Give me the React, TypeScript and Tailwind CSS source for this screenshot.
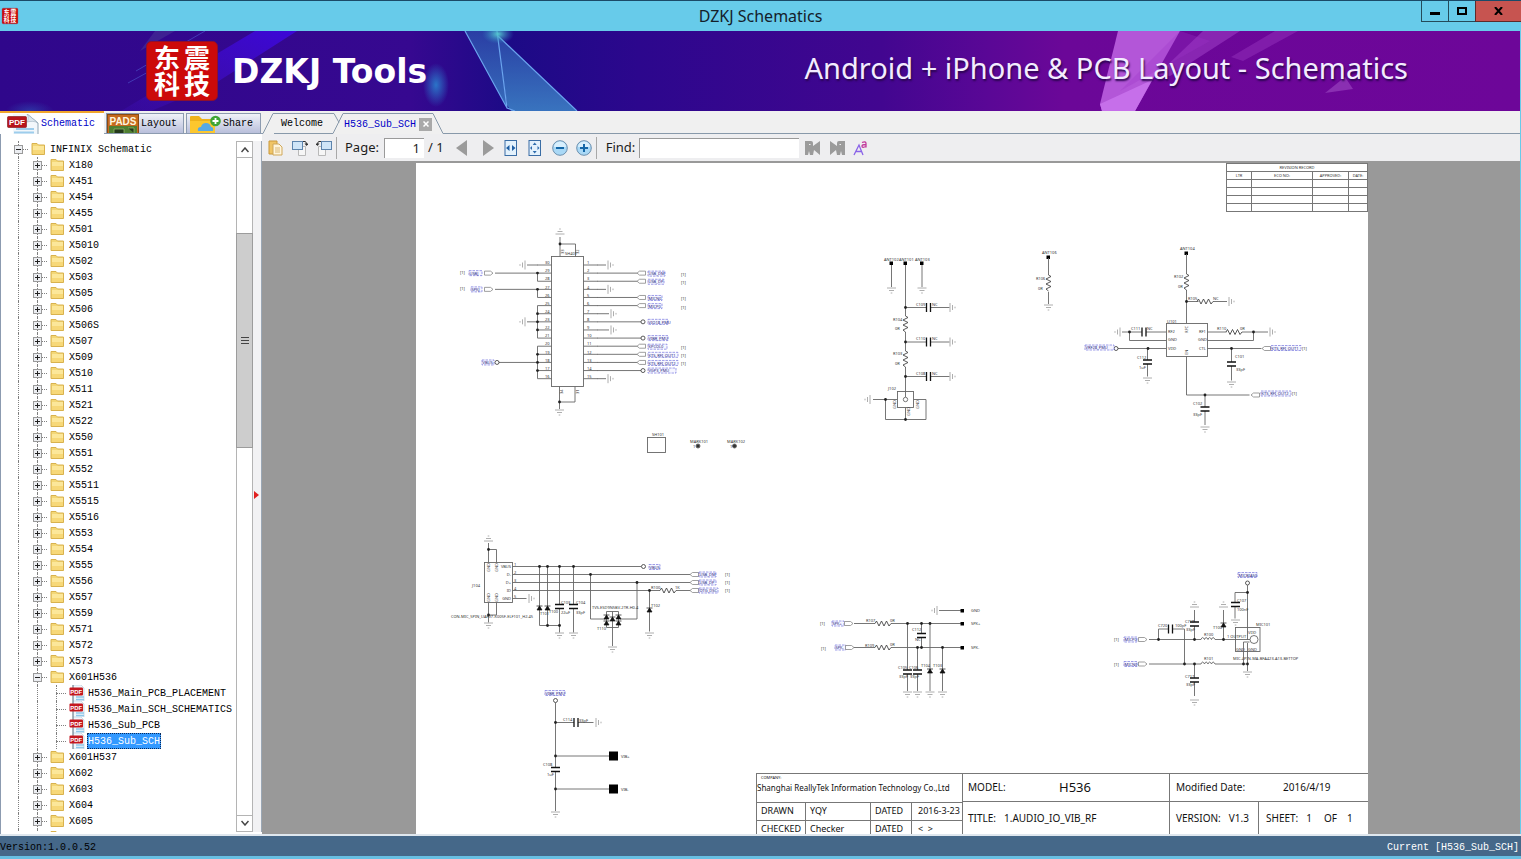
import { useState } from 'react';
import type { ReactNode } from 'react';

type Dir = 'up' | 'down' | 'left' | 'right';

interface Point {
  x: number;
  y: number;
}

const FOLDERS_BEFORE = [
  'X180', 'X451', 'X454', 'X455', 'X501', 'X5010', 'X502', 'X503', 'X505', 'X506', 'X506S',
  'X507', 'X509', 'X510', 'X511', 'X521', 'X522', 'X550', 'X551', 'X552', 'X5511', 'X5515',
  'X5516', 'X553', 'X554', 'X555', 'X556', 'X557', 'X559', 'X571', 'X572', 'X573'
];

const FILES = ['H536_Main_PCB_PLACEMENT', 'H536_Main_SCH_SCHEMATICS', 'H536_Sub_PCB', 'H536_Sub_SCH'];

const FOLDERS_AFTER = ['X601H537', 'X602', 'X603', 'X604', 'X605', ''];

const MONO = "font-['Liberation_Mono',monospace] text-[10px]";
const UI = "font-['Noto_Sans','Open_Sans',sans-serif]";

/* ---------- icons ---------- */

function SealIcon({ className }: { className: string }) {
  return (
    <svg viewBox="0 0 72 60" preserveAspectRatio="none" className={`overflow-visible ${className}`} aria-hidden="true">
      <rect x="0.5" y="0.5" width="71" height="59" rx="5" fill="#cc0a0a" stroke="#8d1030" />
      <g
        fill="#fff"
        fontFamily="'Noto Sans CJK SC', sans-serif"
        fontWeight="700"
        fontSize="26"
        textAnchor="middle"
      >
        <text x="21" y="27">东</text>
        <text x="51" y="27">震</text>
        <text x="21" y="53">科</text>
        <text x="51" y="53">技</text>
      </g>
    </svg>
  );
}

function FolderIcon() {
  return (
    <svg viewBox="0 0 15 13" className="-mt-0.5 h-[13px] w-[15px]" aria-hidden="true">
      <path d="M1 1.500h5l1.500 1.500h6v9.500H1z" fill="#f3d777" stroke="#d9b24e" />
      <path d="M2 4h11v8H2z" fill="#fce79a" />
      <path d="M2 8h11v4H2z" fill="#f7d878" />
    </svg>
  );
}

function PdfIcon() {
  return (
    <svg viewBox="0 0 16 16" className="size-4" aria-hidden="true">
      <path d="M4 0h8l3 3v13H4z" fill="#f0f8fd" stroke="#b9cfdc" strokeWidth="0.7" />
      <path d="M4 0v16" stroke="#4b5c68" strokeWidth="0.800" />
      <path d="M7 12h8M7 14.500h8" stroke="#8fc8ea" strokeWidth="1.400" />
      <rect x="0.500" y="2.500" width="13.500" height="8" rx="1" fill="#c4181f" />
      <text x="7.200" y="8.800" fontSize="6" fontWeight="700" fill="#fff" textAnchor="middle" fontFamily="'Liberation Sans', sans-serif">
        PDF
      </text>
    </svg>
  );
}

function PdfTabIcon() {
  return (
    <svg viewBox="0 0 32 20" className="h-5 w-8" aria-hidden="true">
      <path d="M6 0h16l9 8v12H6z" fill="#f2f7fb" />
      <path d="M20 0l11 9v11" fill="none" stroke="#8fa5b4" />
      <path d="M20 0c2 3 1 7 0 8 4-1 8-1 11 1z" fill="#dbe6ee" stroke="#9cb0bd" strokeWidth="0.600" />
      <path d="M9 15h18M7 18.500h20" stroke="#9dcdec" strokeWidth="2" />
      <rect x="0.500" y="2.500" width="19" height="11" rx="1" fill="#b8141b" stroke="#7d0d12" strokeWidth="0.600" />
      <text x="10" y="11" fontSize="8" fontWeight="700" fill="#fff" textAnchor="middle" fontFamily="'Liberation Sans', sans-serif">
        PDF
      </text>
    </svg>
  );
}

function PadsIcon() {
  return (
    <svg viewBox="0 0 32 19" className="h-[19px] w-8" aria-hidden="true">
      <rect x="0.500" y="0.500" width="31" height="19" fill="#c56a1d" stroke="#8a4a12" />
      <path d="M2 12h28v7H2z" fill="#4f7f32" />
      <path d="M7 19v-4h10v4M21 14h6v5" fill="#243a1b" stroke="#9cc071" strokeWidth="0.700" />
      <text x="16" y="10.500" fontSize="10" fontWeight="700" fill="#fff6df" textAnchor="middle" fontFamily="'Liberation Sans', sans-serif">
        PADS
      </text>
    </svg>
  );
}

function ShareIcon() {
  return (
    <svg viewBox="0 0 32 18" className="h-[18px] w-8" aria-hidden="true">
      <path d="M1 18V2q0-1 1-1h8l3 3h11q2 0 2 2v12z" fill="#eeb21c" />
      <path d="M1 18V6h23q2 0 2 2v10z" fill="#fcc72e" />
      <path d="M9 16q-1-4 3-4 1-4 5-4 4 0 5 4 3 0 2 4z" fill="#58a9e6" />
      <circle cx="26.500" cy="6" r="5.300" fill="#3fa535" />
      <path d="M23.500 6h6M26.500 3v6" stroke="#fff" strokeWidth="1.800" />
    </svg>
  );
}

function OpenIcon() {
  return (
    <svg viewBox="0 0 16 16" className="size-4" aria-hidden="true">
      <path d="M1 1h8v13H1z" fill="#f0c566" stroke="#c9983a" />
      <path d="M5 4h6l3 3v8H5z" fill="#fff5dc" stroke="#cfa75a" />
      <path d="M7 8h5M7 10h5M7 12h5" stroke="#d9b877" />
    </svg>
  );
}

function RotateIcon({ flip }: { flip?: boolean }) {
  return (
    <svg viewBox="0 0 16 16" className={flip ? 'size-4 -scale-x-100' : 'size-4'} aria-hidden="true">
      <path d="M6.500 6.500h7v9h-7z" fill="#f6f6f6" stroke="#b9b9b9" />
      <rect x="0.500" y="1.500" width="10" height="8" fill="#cfe5f8" stroke="#5d84ad" />
      <path d="M11 1.500h2q1.500 0 1.500 3" fill="none" stroke="#333" />
      <path d="M12.500 3.500h4l-2 2.500z" fill="#333" />
    </svg>
  );
}

function FitIcon({ page }: { page?: boolean }) {
  return (
    <svg viewBox="0 0 14 16" className="h-4 w-3.5" aria-hidden="true">
      <rect x="1" y="0.500" width="11.500" height="15" fill="#e3f1fc" stroke="#3a6da5" />
      {page ? (
        <path d="M6.700 2.500l2 2.500h-4zM6.700 13.500l2-2.500h-4zM2 8l2-2v4zM11.500 8l-2-2v4z" fill="#2f6dad" />
      ) : (
        <path d="M2 8l3.500-3v6zM11.500 8L8 5v6z" fill="#1f5fa5" />
      )}
    </svg>
  );
}

function ZoomIcon({ plus }: { plus?: boolean }) {
  return (
    <svg viewBox="0 0 16 16" className="size-4" aria-hidden="true">
      <circle cx="8" cy="8" r="7.300" fill="#a9d8f6" stroke="#6c8fae" />
      <path d="M2 7a6 5.500 0 0 1 12 0z" fill="#d8effd" />
      <path d={plus ? 'M4 8h8M8 4v8' : 'M4 8h8'} stroke="#1467a8" strokeWidth="2" />
    </svg>
  );
}

function ArrowIcon({ right }: { right?: boolean }) {
  return (
    <svg viewBox="0 0 12 16" className="h-4 w-3" aria-hidden="true">
      <path d={right ? 'M1 0l11 8-11 8z' : 'M11 0L0 8l11 8z'} fill="#9b9b9b" />
    </svg>
  );
}

function FindIcon({ next }: { next?: boolean }) {
  return (
    <svg viewBox="0 0 16 14" className={next ? 'h-3.5 w-4 -scale-x-100' : 'h-3.5 w-4'} aria-hidden="true">
      <path d="M0 0h6q2 0 2 2v3l7-5v14l-6-5-1 5H5l-1-4-1 4H0z" fill="#9b9b9b" />
      <path d="M4 3.500h1.500" stroke="#eee" />
    </svg>
  );
}

/* ---------- window chrome ---------- */

function TitleBar() {
  return (
    <header className="flex h-[31px] shrink-0 items-center border-t border-[#1b4a68] bg-[#67cbea]">
      <div className="w-[100px] pl-0.5">
        <SealIcon className="size-4" />
      </div>
      <h1 className={`${UI} flex-1 text-center text-[16px] leading-none text-[#14202a]`}>DZKJ Schematics</h1>
      <div className="flex w-[100px] self-start">
        <button aria-label="Minimize" className="flex h-[21px] w-7 items-center justify-center border border-t-0 border-[#244a5a]">
          <span className="mt-1 h-[3px] w-2.5 bg-black" />
        </button>
        <button aria-label="Maximize" className="flex h-[21px] w-[26px] items-center justify-center border-b border-[#244a5a]">
          <span className="h-2 w-2.5 border-2 border-black" />
        </button>
        <button aria-label="Close" className="flex h-[21px] flex-1 items-center justify-center border-b border-l border-[#5e2a2a] bg-[#c75450]">
          <svg viewBox="0 0 9 8" className="h-2 w-[9px]" aria-hidden="true">
            <path d="M1 0l7 8M8 0L1 8" stroke="#000" strokeWidth="2" />
          </svg>
        </button>
      </div>
    </header>
  );
}

function Banner() {
  return (
    <div className="relative flex h-20 shrink-0 items-center border-r border-[#67cbea] bg-[#330690]">
      <svg viewBox="0 0 1520 80" preserveAspectRatio="none" className="absolute inset-0 size-full" aria-hidden="true">
        <defs>
          <linearGradient id="sky">
            <stop offset="0" stopColor="#2f078b" />
            <stop offset="0.270" stopColor="#360890" />
            <stop offset="0.335" stopColor="#1c0a86" />
            <stop offset="0.420" stopColor="#2c078d" />
            <stop offset="0.580" stopColor="#420690" />
            <stop offset="0.650" stopColor="#5a0796" />
            <stop offset="0.700" stopColor="#6b0798" />
            <stop offset="1" stopColor="#6d0699" />
          </linearGradient>
          <linearGradient id="glass" x1="0" y1="0" x2="0" y2="1">
            <stop offset="0" stopColor="#2c4bab" />
            <stop offset="1" stopColor="#3d86c8" />
          </linearGradient>
          <radialGradient id="glow">
            <stop offset="0" stopColor="#2b74c8" />
            <stop offset="1" stopColor="#2b74c8" stopOpacity="0" />
          </radialGradient>
          <radialGradient id="spark">
            <stop offset="0" stopColor="#55c8d0" />
            <stop offset="1" stopColor="#2f7fc0" stopOpacity="0" />
          </radialGradient>
          <linearGradient id="beam" x1="1" y1="0" x2="0" y2="1">
            <stop offset="0" stopColor="#3c07d8" />
            <stop offset="1" stopColor="#4412c8" stopOpacity="0.200" />
          </linearGradient>
        </defs>
        <rect width="1520" height="80" fill="url(#sky)" />
        <path d="M255 0h42l-86 55-60 25h-30z" fill="url(#beam)" />
        <path d="M136 40L205 0M128 52l22-12" stroke="#4f5ad0" strokeWidth="1" opacity="0.600" />
        <path d="M140 20L175 0h-20z" fill="#4a3a98" opacity="0.500" />
        <ellipse cx="436" cy="54" rx="13" ry="22" fill="url(#glow)" />
        <ellipse cx="30" cy="80" rx="24" ry="10" fill="url(#glow)" opacity="0.400" />
        <path d="M465 0h32l10 77z" fill="url(#glass)" opacity="0.800" />
        <path d="M497 4l80 76h-66l-4-6z" fill="url(#glass)" opacity="0.850" />
        <path d="M465 0l42 77M497 0l10 77 8 3M497 4l80 76" fill="none" stroke="#6aa4ee" strokeWidth="1.200" />
        <ellipse cx="498" cy="3" rx="16" ry="10" fill="url(#spark)" />
        <path d="M1118 0h62l-45 80h-33l-2-7z" fill="#b356d8" />
        <path d="M1100 73l52-24-17 31h-33z" fill="#c66fea" />
        <path d="M1203 0h37l-70 45-13-1z" fill="#8d2bb6" opacity="0.850" />
        <path d="M1275 0h23l-55 30-12-4z" fill="#8d2bb6" opacity="0.600" />
        <path d="M1180 0l-60 60 90-50z" fill="#9b35c6" opacity="0.300" />
        <path d="M1345 46l8 12-28 4z" fill="#8a2fb2" />
      </svg>
      <div className="relative flex w-full items-center justify-between pl-[146px] pr-[112px]">
        <div className="flex items-center gap-3.5">
          <SealIcon className="h-[60px] w-[72px]" />
          <span className="font-['DejaVu_Sans',sans-serif] text-[33px] font-bold leading-none text-white">DZKJ Tools</span>
        </div>
        <span className={`${UI} pb-2 text-[29px] leading-none text-[#f3ecff] [text-shadow:1px_2px_2px_#2a0550]`}>
          Android + iPhone &amp; PCB Layout - Schematics
        </span>
      </div>
    </div>
  );
}

function SideTabs() {
  const idle = 'mt-0.5 flex items-center gap-0.5 border border-b-0 border-[#8c9bb0] bg-linear-to-b from-[#f0f2f8] to-[#b9bfdb]';
  return (
    <nav className={`${MONO} flex h-[23px] border-b border-[#8c9bb0] bg-[#f0f0f0] text-black`}>
      <button className="-mb-px flex w-[104px] items-center gap-0.5 border-t-2 border-[#f0a52c] bg-white pl-[7px] text-[#0000c8]">
        <PdfTabIcon />
        Schematic
      </button>
      <button className={`${idle} ml-0.5 w-[78px]`}>
        <PadsIcon />
        Layout
      </button>
      <button className={`${idle} ml-0.5 w-[75px] pl-0.5`}>
        <ShareIcon />
        Share
      </button>
    </nav>
  );
}

/* ---------- tree ---------- */

function Guide() {
  return <span className="ml-[9px] w-2.5 shrink-0 self-stretch border-l border-dotted border-[#808080]" />;
}

interface TreeRowProps {
  depth: number;
  label: string;
  expanded?: boolean;
  file?: boolean;
  selected?: boolean;
  onSelect?: () => void;
}

function TreeRow({ depth, label, expanded, file, selected, onSelect }: TreeRowProps) {
  return (
    <li className="flex h-4 items-center pl-2">
      {Array.from({ length: depth }, (_, i) => (
        <Guide key={i} />
      ))}
      <span className="relative flex w-[19px] shrink-0 items-center justify-center self-stretch">
        <span className="absolute inset-y-0 left-[9px] border-l border-dotted border-[#808080]" />
        <span className="absolute left-[9px] right-0 top-2 border-t border-dotted border-[#808080]" />
        {!file && (
          <button
            aria-label={expanded ? 'Collapse' : 'Expand'}
            className="relative flex size-[9px] items-center justify-center border border-[#9a9a9a] bg-[#eceef2]"
          >
            <span className="absolute left-px right-px top-[3px] h-px bg-[#222]" />
            {!expanded && <span className="absolute inset-y-px left-[3px] w-px bg-[#222]" />}
          </button>
        )}
      </span>
      <span className="flex w-[21px] shrink-0 justify-center">{file ? <PdfIcon /> : <FolderIcon />}</span>
      {label && (
        <button
          onClick={onSelect}
          className={
            selected
              ? 'h-4 whitespace-nowrap bg-[#3399ff] px-px leading-[18px] text-white outline-1 -outline-offset-1 outline-dotted outline-[#0a2a5a]'
              : 'h-4 whitespace-nowrap px-px leading-[18px] text-black'
          }
        >
          {label}
        </button>
      )}
    </li>
  );
}

function Tree() {
  const [selected, setSelected] = useState('H536_Sub_SCH');

  return (
    <div className="flex min-h-0 flex-1 border-l border-[#8c9bb0] bg-white pb-0.5 pt-[7px]">
      <ul className={`${MONO} min-w-0 flex-1 overflow-hidden`}>
        <TreeRow depth={0} label="INFINIX Schematic" expanded />
        {FOLDERS_BEFORE.map((name) => (
          <TreeRow key={name} depth={1} label={name} />
        ))}
        <TreeRow depth={1} label="X601H536" expanded />
        {FILES.map((name) => (
          <TreeRow key={name} depth={2} label={name} file selected={name === selected} onSelect={() => setSelected(name)} />
        ))}
        {FOLDERS_AFTER.map((name) => (
          <TreeRow key={name} depth={1} label={name} />
        ))}
      </ul>
      <div className="flex w-[17px] flex-col border border-[#b4b4b4] bg-white">
        <button aria-label="Scroll up" className="flex h-4 items-center justify-center border-b border-[#b4b4b4]">
          <svg viewBox="0 0 8 6" className="h-1.5 w-2" aria-hidden="true">
            <path d="M0.500 5L4 1l3.500 4" fill="none" stroke="#444" strokeWidth="1.500" />
          </svg>
        </button>
        <div className="flex-[75]" />
        <div className="-mx-px flex flex-[214] flex-col items-center justify-center gap-0.5 border border-[#9c9c9c] bg-[#cdcdcd]">
          <span className="h-px w-2 bg-[#444]" />
          <span className="h-px w-2 bg-[#444]" />
          <span className="h-px w-2 bg-[#444]" />
        </div>
        <div className="flex-[368]" />
        <button aria-label="Scroll down" className="flex h-4 items-center justify-center border-t border-[#b4b4b4]">
          <svg viewBox="0 0 8 6" className="h-1.5 w-2" aria-hidden="true">
            <path d="M0.500 1L4 5l3.500-4" fill="none" stroke="#444" strokeWidth="1.500" />
          </svg>
        </button>
      </div>
      <div className="flex w-[9px] items-center border-r border-[#9aa7b5] bg-[#f2f2f4] pl-px">
        <svg viewBox="0 0 5 8" className="mt-4 h-2 w-[5px]" aria-hidden="true">
          <path d="M0 0l5 4-5 4z" fill="#e02020" />
        </svg>
      </div>
    </div>
  );
}

/* ---------- viewer ---------- */

function TabEdge({ d }: { d: string }) {
  return (
    <svg viewBox="0 0 12 21" className="h-[21px] w-3 shrink-0" aria-hidden="true">
      <path d={d} fill="none" stroke="#8899aa" />
    </svg>
  );
}

function DocTabs() {
  return (
    <nav className={`${MONO} flex h-[23px] items-end bg-[#f0f0f0]`}>
      <TabEdge d="M0 20.500h1L11 0.500h1" />
      <button className="h-[21px] border-y border-[#8899aa] pl-[7px] pr-[9px] text-black">Welcome</button>
      <TabEdge d="M-1 0.500h3l5 9M0 20.500h1L11 0.500h1" />
      <div className="flex h-[21px] items-center border-t border-[#8899aa]">
        <button className="text-[#0000c8]">H536_Sub_SCH</button>
        <button aria-label="Close tab" className="ml-[3px] flex size-[13px] items-center justify-center bg-[#a9a9a9]">
          <svg viewBox="0 0 6 6" className="size-1.5" aria-hidden="true">
            <path d="M0.500 0.500l5 5M5.500 0.500l-5 5" stroke="#fff" strokeWidth="1.500" />
          </svg>
        </button>
      </div>
      <TabEdge d="M0 0.500h1L11 20.500h1" />
      <span className="flex-1 border-b border-[#8899aa]" />
    </nav>
  );
}

function Toolbar() {
  return (
    <div className={`${UI} flex h-[29px] shrink-0 items-center border-b-2 border-[#999] bg-[#eeeef0] pl-1.5 text-[13px] text-[#1c1c1c]`}>
      <div className="flex gap-2">
        <button aria-label="Open"><OpenIcon /></button>
        <button aria-label="Rotate right"><RotateIcon /></button>
        <button aria-label="Rotate left"><RotateIcon flip /></button>
      </div>
      <span className="ml-1 h-[22px] w-px bg-[#a8a8a8]" />
      <label htmlFor="page" className="ml-2">Page:</label>
      <input
        id="page"
        defaultValue="1"
        className="ml-[5px] h-5 w-10 border border-b-0 border-r-0 border-[#9a9a9a] bg-white pr-1 text-right"
      />
      <span className="ml-1">/ 1</span>
      <div className="ml-3 flex items-center">
        <button aria-label="Previous page"><ArrowIcon /></button>
        <button aria-label="Next page" className="ml-3.5"><ArrowIcon right /></button>
        <button aria-label="Fit width" className="ml-2.5"><FitIcon /></button>
        <button aria-label="Fit page" className="ml-2.5"><FitIcon page /></button>
        <button aria-label="Zoom out" className="ml-2.5"><ZoomIcon /></button>
        <button aria-label="Zoom in" className="ml-2"><ZoomIcon plus /></button>
      </div>
      <span className="ml-1 h-[22px] w-px bg-[#a8a8a8]" />
      <label htmlFor="find" className="ml-[9px]">Find:</label>
      <input id="find" className="ml-1 h-5 w-40 border border-b-0 border-r-0 border-[#9a9a9a] bg-white px-1" />
      <button aria-label="Find previous" className="ml-1.5"><FindIcon /></button>
      <button aria-label="Find next" className="ml-2"><FindIcon next /></button>
      <button aria-label="Match case" className="ml-2">
        <svg viewBox="0 0 16 16" className="size-4" aria-hidden="true">
          <path d="M1 15L6 5l4 10M3 11.500h6" fill="none" stroke="#8a63e8" strokeWidth="1.300" />
          <path d="M9 2.500q4-1.500 4 1v4M13 4.500q-4 0-4 1.700 0 2 4 0.300" fill="none" stroke="#c23a9c" strokeWidth="1.300" />
        </svg>
      </button>
    </div>
  );
}

/* ---------- schematic symbols ---------- */

const ANGLE: Record<Dir, number> = { down: 0, left: 90, up: 180, right: 270 };

function Gnd({ x, y, dir = 'down' }: Point & { dir?: Dir }) {
  return (
    <path
      transform={`translate(${x} ${y}) rotate(${ANGLE[dir]})`}
      d="M-4.500 0h9M-2.500 2.500h5M-0.800 5h1.600"
      stroke="#999"
      strokeWidth="0.800"
    />
  );
}

function Dot({ x, y }: Point) {
  return <circle cx={x} cy={y} r="1.400" fill="#222" stroke="none" />;
}

function Res({ x, y, vertical }: Point & { vertical?: boolean }) {
  return (
    <path
      transform={`translate(${x} ${y}) rotate(${vertical ? 90 : 0})`}
      d="M-8 0l1.500-2.500 2.500 5 2.500-5 2.500 5 2.500-5 2.500 5 2-2.500"
      stroke="#444"
    />
  );
}

function Cap({ x, y, side }: Point & { side?: boolean }) {
  return (
    <g transform={`translate(${x} ${y}) rotate(${side ? 90 : 0})`}>
      <rect x="-4.500" y="-2" width="9" height="4" fill="#fff" stroke="none" />
      <path d="M-4.500 -2h9M-4.500 2h9" stroke="#111" strokeWidth="1.300" />
    </g>
  );
}

function Diode({ x, y }: Point) {
  return <path d={`M${x} ${y - 2}l2.500 4h-5zM${x - 3} ${y - 2}h6`} fill="#111" stroke="#111" strokeWidth="0.700" />;
}

function Port({ x, y, flip }: Point & { flip?: boolean }) {
  return (
    <path
      transform={`translate(${x} ${y}) scale(${flip ? -1 : 1} 1)`}
      d="M0 0l2.500-2h6v4h-6z"
      fill="#fff"
      stroke="#777"
      strokeWidth="0.700"
    />
  );
}

function Ring({ x, y }: Point) {
  return <circle cx={x} cy={y} r="2" fill="#fff" stroke="#333" strokeWidth="0.800" />;
}

function Note({ x, y, children, turn }: Point & { children: ReactNode; turn?: boolean }) {
  return (
    <text transform={`translate(${x} ${y}) rotate(${turn ? -90 : 0})`} fill="#333" stroke="none">
      {children}
    </text>
  );
}

// Net names are dashed boxes with blue text inside
function Net({ x, y, w, children }: Point & { w: number; children: string }) {
  return (
    <g>
      <rect x={x} y={y - 2.500} width={w} height="5" fill="#f6f6ff" stroke="#6060d8" strokeWidth="0.600" strokeDasharray="2.500 1" />
      <text x={x + 0.500} y={y + 1.700} fill="#1c1c80" stroke="none">
        {children}
      </text>
    </g>
  );
}

function IoConnector() {
  const row = (i: number) => 265 + i * 8.120;
  const pins = Array.from({ length: 15 }, (_, i) => i);
  const nets: [number, string, number][] = [
    [1, 'USB_DM', 17], [2, 'USB_DP', 16], [4, 'MICN0', 14], [5, 'MICP0', 14],
    [10, 'KPCOL0', 19], [11, 'KTS_RFI_OUT1', 30], [12, 'KTS_RFI_OUT2', 30]
  ];
  const rings: [number, string, number][] = [[7, 'VIO18_PMU', 20], [9, 'VIBR_PMU', 20], [13, 'VGP3_PMU', 28]];
  const grounds: [number, number][] = [[0, 606], [3, 606], [6, 609], [8, 609], [14, 606]];

  return (
    <g>
      <rect x="551.500" y="256.500" width="32" height="130" />
      <path d="M560 237v19.500M560 244h15.500v12.500M559.500 386.500V409M559.500 402h15.500v-15.500" />
      <Dot x={560} y={244} />
      <Dot x={559.500} y={402} />
      <Gnd x={560} y={234} dir="up" />
      <Gnd x={559.500} y={410} />
      <Note x={565} y={255}>SH401</Note>
      <Note x={564} y={254} turn>33</Note>
      <Note x={579} y={254} turn>32</Note>
      <Note x={563} y={394} turn>34</Note>
      <Note x={579} y={394} turn>31</Note>
      {pins.map((i) => (
        <g key={i}>
          <path d={`M537.500 ${row(i)}h14M583.500 ${row(i)}h14`} />
          <Note x={545} y={row(i) - 0.800}>{30 - i}</Note>
          <Note x={587} y={row(i) - 0.800}>{i + 1}</Note>
        </g>
      ))}
      <path d={`M527 ${row(0)}h11M495 ${row(1)}h42M495 ${row(3)}h42M527 ${row(7)}h10M498 ${row(12)}h40`} />
      <path d={`M537.500 ${row(1)}V${row(2)}M537.500 ${row(3)}V${row(4)}M537.500 ${row(5)}V${row(9)}M537.500 ${row(10)}V${row(14)}`} />
      {[1, 3, 6, 7, 8, 11, 12, 13].map((i) => (
        <Dot key={i} x={537.500} y={row(i)} />
      ))}
      <Gnd x={525} y={row(0)} dir="left" />
      <Gnd x={525} y={row(7)} dir="left" />
      <Port x={493} y={row(1)} flip />
      <Port x={493} y={row(3)} flip />
      <Net x={469} y={row(1)} w={13}>USBJ</Net>
      <Net x={471} y={row(3)} w={11}>SPKJ</Net>
      <Note x={460} y={row(1) + 1}>[1]</Note>
      <Note x={460} y={row(3) + 1}>[1]</Note>
      <Net x={482} y={row(12)} w={12}>VBUS</Net>
      <Ring x={497} y={row(12)} />
      {grounds.map(([i, x]) => (
        <g key={i}>
          <path d={`M597 ${row(i)}H${x}`} />
          <Gnd x={x + 2} y={row(i)} dir="right" />
        </g>
      ))}
      {nets.map(([i, name, w]) => (
        <g key={i}>
          <path d={`M597 ${row(i)}h40`} />
          <Port x={637} y={row(i)} />
          <Net x={648} y={row(i) + 0.500} w={w}>{name}</Net>
          <Note x={681} y={row(i) + 3}>[1]</Note>
        </g>
      ))}
      {rings.map(([i, name, w]) => (
        <g key={i}>
          <path d={`M597 ${row(i)}h44`} />
          <Ring x={643} y={row(i)} />
          <Net x={648} y={row(i)} w={w}>{name}</Net>
        </g>
      ))}
      <rect x="647.500" y="437.500" width="18" height="15" />
      <Note x={652} y={436}>SH101</Note>
      <Note x={690} y={443}>MARK101</Note>
      <Note x={727} y={443}>MARK102</Note>
      <Note x={693} y={448}>1</Note>
      <Note x={730} y={448}>1</Note>
      <circle cx="698" cy="446" r="2" fill="#333" />
      <circle cx="734.500" cy="446" r="2" fill="#333" />
    </g>
  );
}

function Pad({ x, y }: Point) {
  return <rect x={x - 1.500} y={y - 1.500} width="3.500" height="3.500" fill="#000" stroke="none" />;
}

function Antennas() {
  return (
    <g>
      <Note x={884} y={260.500}>ANT102</Note>
      <Note x={899} y={260.500}>ANT101</Note>
      <Note x={915} y={260.500}>ANT103</Note>
      <path d="M891.500 263v24M905.500 263v53M922 263v24M905.500 332v19M905.500 367v30" />
      <Pad x={891} y={263} />
      <Pad x={905} y={263} />
      <Pad x={921.500} y={263} />
      <Gnd x={891.500} y={288} />
      <Gnd x={922} y={288} />
      {[307.500, 342, 376.500].map((y, i) => (
        <g key={y}>
          <path d={`M905.500 ${y}h44`} />
          <Dot x={905.500} y={y} />
          <Cap x={928.500} y={y} side />
          <Gnd x={950} y={y} dir="right" />
          <Note x={916} y={y - 2}>{['C109', 'C110', 'C108'][i]}</Note>
          <Note x={932} y={y - 2}>NC</Note>
        </g>
      ))}
      <Res x={905.500} y={324} vertical />
      <Res x={905.500} y={359} vertical />
      <Note x={893} y={321}>R104</Note>
      <Note x={895} y={330}>0R</Note>
      <Note x={893} y={355}>R103</Note>
      <Note x={895} y={365}>0R</Note>
      <rect x="897.500" y="391.500" width="16" height="16" />
      <circle cx="905.500" cy="399.500" r="2.200" />
      <path d="M873 399.500h24M885.500 399.500v20h40.500v-20h-12.500M905.500 407.500v12" />
      <Dot x={885.500} y={399.500} />
      <Dot x={905.500} y={419.500} />
      <Gnd x={870} y={399.500} dir="left" />
      <Note x={888} y={390}>J102</Note>
      <Note x={896} y={409} turn>GND</Note>
      <Note x={919} y={409} turn>GND</Note>
      <Note x={910} y={416} turn>GND</Note>

      <Note x={1042} y={254}>ANT106</Note>
      <Pad x={1048} y={257} />
      <path d="M1048.500 258v17M1048.500 292v12" />
      <Res x={1048.500} y={283} vertical />
      <Gnd x={1048.500} y={305} />
      <Note x={1036} y={280}>R106</Note>
      <Note x={1038} y={290}>0R</Note>
    </g>
  );
}

function RfSwitch() {
  return (
    <g>
      <Note x={1180} y={250}>ANT104</Note>
      <Pad x={1186} y={253} />
      <path d="M1186.500 254v20M1186.500 290v33M1186.500 301.500h12M1213 301.500h14" />
      <Res x={1186.500} y={282} vertical />
      <Res x={1205} y={301.500} />
      <Dot x={1186.500} y={301.500} />
      <Gnd x={1229} y={301.500} dir="right" />
      <Note x={1174} y={278}>R102</Note>
      <Note x={1178} y={288}>0R</Note>
      <Note x={1188} y={300}>R105</Note>
      <Note x={1213} y={300}>NC</Note>
      <rect x="1166.500" y="323.500" width="41" height="33" />
      <Note x={1167} y={323}>U101</Note>
      <Note x={1168} y={333}>RF2</Note>
      <Note x={1168} y={341}>GND</Note>
      <Note x={1168} y={349.500}>VDD</Note>
      <Note x={1199} y={333}>RF1</Note>
      <Note x={1198} y={341}>GND</Note>
      <Note x={1199} y={349.500}>CTL</Note>
      <Note x={1188} y={333} turn>RFC</Note>
      <Note x={1188} y={355} turn>EN</Note>
      <path d="M1122 332h44M1129.500 332v8.500h37M1117 348.500h49M1147.500 348.500v28" />
      <Cap x={1144} y={332} side />
      <Cap x={1147.500} y={362} />
      <Gnd x={1120} y={332} dir="left" />
      <Gnd x={1147.500} y={378} />
      <Dot x={1129.500} y={332} />
      <Dot x={1148} y={348.500} />
      <Ring x={1116} y={348.500} />
      <Net x={1085} y={347.500} w={29}>VRF28_PMU</Net>
      <Note x={1131} y={330}>C111</Note>
      <Note x={1147} y={330}>NC</Note>
      <Note x={1137} y={359}>C112</Note>
      <Note x={1139} y={369}>1uF</Note>
      <path d="M1207.500 332h19M1242 332h26M1253.500 332v8.500h-46M1207.500 348.500h54M1231.500 348.500v32" />
      <Res x={1234} y={332} />
      <Dot x={1253.500} y={332} />
      <Dot x={1231.500} y={348.500} />
      <Gnd x={1270} y={332} dir="right" />
      <Cap x={1231.500} y={364} />
      <Gnd x={1231.500} y={382} />
      <Port x={1262} y={348.500} />
      <Net x={1271} y={348} w={30}>KTS_RFI_OUT1</Net>
      <Note x={1302} y={349.500}>[1]</Note>
      <Note x={1217} y={330}>R110</Note>
      <Note x={1240} y={330}>0R</Note>
      <Note x={1235} y={358}>C101</Note>
      <Note x={1236} y={370.500}>33pF</Note>
      <path d="M1186.500 356.500v38.500h63M1205 395v30" />
      <Dot x={1205} y={395} />
      <Cap x={1205} y={409} />
      <Gnd x={1205} y={427} />
      <Port x={1251} y={395} />
      <Net x={1261} y={393.500} w={30}>KTS_RFI_OUT2</Net>
      <Note x={1292} y={395}>[1]</Note>
      <Note x={1193} y={405}>C102</Note>
      <Note x={1193} y={416}>33pF</Note>
    </g>
  );
}

function UsbPort() {
  return (
    <g>
      <rect x="484.500" y="562.500" width="28" height="40" />
      <Note x={472} y={587}>J104</Note>
      <Gnd x={488.500} y={541} dir="up" />
      <path d="M488.500 543v19.500M488.500 549.500h8v13M488.500 602.500v20M496.500 602.500v12.500h-8" />
      <Dot x={488.500} y={549.500} />
      <Dot x={488.500} y={615} />
      <Gnd x={488.500} y={623} />
      <Note x={490} y={572} turn>GND</Note>
      <Note x={498} y={572} turn>GND</Note>
      <Note x={490} y={602} turn>GND</Note>
      <Note x={498} y={602} turn>GND</Note>
      {['VBUS', 'D-', 'D+', 'ID', 'GND'].map((name, i) => (
        <g key={name}>
          <text x="511" y={568 + i * 8} textAnchor="end" fill="#333" stroke="none">{name}</text>
          <Note x={514} y={565.500 + i * 8}>{i + 1}</Note>
        </g>
      ))}
      <path d="M512.500 566.500H641M512.500 574.500H690M512.500 582.500H690M512.500 590.500H660M676 590.500h14M512.500 598.500h14" />
      <Gnd x={529} y={598.500} dir="right" />
      <path d="M539.500 566.500v59h20M547.500 566.500v59M559.500 566.500v66M573.500 566.500v66M590.500 574.500v44.500h15M637 582.500v36.500h-17M649.500 590.500v41" />
      {[539.500, 547.500, 559.500, 573.500].map((x) => (
        <Dot key={x} x={x} y={566.500} />
      ))}
      <Dot x={590.500} y={574.500} />
      <Dot x={637} y={582.500} />
      <Dot x={649.500} y={590.500} />
      <Dot x={547.500} y={625.500} />
      <Dot x={559.500} y={625.500} />
      <Diode x={539.500} y={608} />
      <Diode x={547.500} y={608} />
      <Diode x={649.500} y={610} />
      <Cap x={559.500} y={606.500} />
      <Cap x={573.500} y={606.500} />
      <Gnd x={559.500} y={633} />
      <Gnd x={573.500} y={633} />
      <Gnd x={649.500} y={633} />
      <Note x={540} y={615}>T101</Note>
      <Note x={549} y={613}>T100</Note>
      <Note x={561} y={604}>C103</Note>
      <Note x={561} y={613.500}>22uF</Note>
      <Note x={576} y={604}>C104</Note>
      <Note x={576} y={613.500}>33pF</Note>
      <Note x={451} y={618}>CON-MIC_5PIN_UAF97-K005F-ELF101_H2.45</Note>
      <Note x={592} y={608.500}>TVS-ESD9N5BV-2TR-H0.4</Note>
      <path d="M606.500 611.500h12v16h-12zM612.500 611.500V646" />
      <Diode x={612.500} y={619} />
      <Diode x={606.500} y={617} />
      <Diode x={606.500} y={623} />
      <Diode x={618.500} y={617} />
      <Diode x={618.500} y={623} />
      <Gnd x={612.500} y={647} />
      <Note x={597} y={630}>T110</Note>
      <Note x={651} y={607}>T102</Note>
      <Ring x={643.500} y={566.500} />
      <Net x={649} y={567} w={11}>VBUS</Net>
      <Res x={668} y={590.500} />
      <Note x={651} y={588.500}>R100</Note>
      <Note x={675} y={588.500}>1K</Note>
      {['USB_DM', 'USB_DP', 'OTG_DSC'].map((name, i) => (
        <g key={name}>
          <Port x={690} y={574.500 + i * 8} />
          <Net x={699} y={574.500 + i * 8} w={i === 2 ? 19 : 17}>{name}</Net>
          <Note x={725} y={576 + i * 8}>[1]</Note>
        </g>
      ))}
    </g>
  );
}

function Speaker() {
  return (
    <g>
      <Gnd x={937} y={610.500} dir="left" />
      <path d="M939 610.500h22M854 623.500h21M891 623.500h70M854 647.500h21M891 647.500h70" />
      <Pad x={962} y={610.500} />
      <Pad x={962} y={623.500} />
      <Pad x={962} y={647.500} />
      <Note x={971} y={612}>GND</Note>
      <Note x={971} y={624.500}>SPK+</Note>
      <Note x={971} y={648.500}>SPK-</Note>
      <Note x={820} y={625}>[1]</Note>
      <Note x={821} y={649.500}>[1]</Note>
      <Net x={832} y={623.500} w={12}>SPK+</Net>
      <Net x={835} y={647.500} w={11}>SPK-</Net>
      <Port x={853} y={623.500} flip />
      <Port x={854} y={647.500} flip />
      <Res x={883} y={623.500} />
      <Res x={883} y={647.500} />
      <Note x={866} y={621.500}>R107</Note>
      <Note x={890} y={621.500}>0R</Note>
      <Note x={865} y={646.500}>R109</Note>
      <Note x={890} y={645.500}>0R</Note>
      <path d="M907.500 623.500V691M917.500 647.500V691M921.500 623.500v24M930 623.500V691M942.500 647.500V691" />
      {[907.500, 921.500, 930].map((x) => (
        <Dot key={x} x={x} y={623.500} />
      ))}
      {[917.500, 921.500, 942.500].map((x) => (
        <Dot key={x} x={x} y={647.500} />
      ))}
      <Cap x={921.500} y={635.500} />
      <Cap x={907.500} y={672} />
      <Cap x={917.500} y={672} />
      <Diode x={930} y={671} />
      <Diode x={942.500} y={671} />
      {[907.500, 917.500, 930, 942.500].map((x) => (
        <Gnd key={x} x={x} y={692} />
      ))}
      <Note x={912} y={631}>C112</Note>
      <Note x={915} y={641}>NC</Note>
      <Note x={898} y={669}>C105</Note>
      <Note x={909} y={669}>C106</Note>
      <Note x={921} y={667}>T104</Note>
      <Note x={933} y={667}>T103</Note>
      <Note x={899} y={678}>33pF</Note>
      <Note x={910} y={678}>33pF</Note>
    </g>
  );
}

function Microphone() {
  return (
    <g>
      <Net x={1238} y={575} w={19}>MICBIAS0</Net>
      <Ring x={1247.500} y={583} />
      <path d="M1247.500 585v55M1247.500 592.500h-12.500v26" />
      <Dot x={1247.500} y={592.500} />
      <Cap x={1235.500} y={604.500} />
      <Gnd x={1235.500} y={620} />
      <Note x={1237} y={602}>C107</Note>
      <Note x={1237} y={611}>100nF</Note>
      <rect x="1235.500" y="627.500" width="24.500" height="24" />
      <circle cx="1254" cy="639.500" r="4" />
      <Note x={1256} y={626}>MIC101</Note>
      <Note x={1227} y={638}>1 OUTPUT</Note>
      <Note x={1248} y={634}>VDD</Note>
      <Note x={1236} y={650.500}>GND</Note>
      <Note x={1248} y={650.500}>GND</Note>
      <Note x={1233} y={660}>MIC-4PIN-MA-BFA423-A13-BETTOP</Note>
      <path d="M1149 639.500h52M1215 639.500h35M1149 664h52M1215 664h32.500M1243.500 664v-22h6M1247.500 664v-21M1247.500 664v7" />
      <path d="M1158.500 639.500v-10.500h26v35M1194.500 610v29.500M1194.500 664v32M1223.500 610v29.500" />
      <path d="M1201 639.500q1.500-4 3.500 0q1.500-4 3.500 0q1.500-4 3.500 0q1.500-4 3.500 0M1201 664q1.500-4 3.500 0q1.500-4 3.500 0q1.500-4 3.500 0q1.500-4 3.500 0" />
      <Cap x={1170.500} y={629} side />
      <Cap x={1194.500} y={624} />
      <Cap x={1194.500} y={680} />
      <Diode x={1223.500} y={625} />
      <Gnd x={1194.500} y={607} dir="up" />
      <Gnd x={1223.500} y={607} dir="up" />
      <Gnd x={1194.500} y={700} />
      <Gnd x={1247.500} y={672} />
      <Dot x={1158.500} y={639.500} />
      <Dot x={1194.500} y={639.500} />
      <Dot x={1223.500} y={639.500} />
      <Dot x={1184.500} y={664} />
      <Dot x={1194.500} y={664} />
      <Dot x={1243.500} y={664} />
      <Dot x={1247.500} y={664} />
      <Note x={1158} y={627}>C720</Note>
      <Note x={1175} y={627}>100pF</Note>
      <Note x={1185} y={623}>C718</Note>
      <Note x={1186} y={631}>33pF</Note>
      <Note x={1213} y={629}>T100</Note>
      <Note x={1204} y={636}>R100</Note>
      <Note x={1204} y={660}>R101</Note>
      <Note x={1185} y={678}>C717</Note>
      <Note x={1186} y={686}>33pF</Note>
      <Note x={1114} y={641}>[1]</Note>
      <Note x={1114} y={665.500}>[1]</Note>
      <Net x={1124} y={639.500} w={13}>MICP0</Net>
      <Net x={1124} y={664} w={13}>MICN0</Net>
      <Port x={1147} y={639.500} flip />
      <Port x={1147} y={664} flip />
    </g>
  );
}

function Vibrator() {
  return (
    <g>
      <Net x={545} y={693} w={20}>VIBR_PMU</Net>
      <Ring x={555.500} y={700.500} />
      <path d="M555.500 702.500V811M555.500 722.500h38M555.500 756h54M555.500 789h54" />
      <Dot x={555.500} y={722.500} />
      <Dot x={555.500} y={756} />
      <Dot x={555.500} y={789} />
      <Cap x={576} y={722.500} side />
      <Cap x={555.500} y={769.500} />
      <Gnd x={596} y={722.500} dir="right" />
      <Gnd x={555.500} y={812} />
      <rect x="609" y="751.500" width="9" height="9" fill="#000" stroke="none" />
      <rect x="609" y="784.500" width="9" height="9" fill="#000" stroke="none" />
      <Note x={563} y={721}>C114</Note>
      <Note x={579} y={722}>33pF</Note>
      <Note x={543} y={766}>C108</Note>
      <Note x={547} y={776}>1uF</Note>
      <Note x={621} y={757.500}>VIB+</Note>
      <Note x={621} y={791}>VIB-</Note>
    </g>
  );
}

function Schematic() {
  return (
    <svg
      viewBox="416 163 952 671"
      className="absolute inset-0 size-full"
      fill="none"
      stroke="#666"
      strokeWidth="0.900"
      fontFamily="'Noto Sans', 'Open Sans', sans-serif"
      fontSize="4"
      role="img"
      aria-label="H536 sub board schematic"
    >
      <IoConnector />
      <Antennas />
      <RfSwitch />
      <UsbPort />
      <Speaker />
      <Microphone />
      <Vibrator />
    </svg>
  );
}

function RevisionTable() {
  const cell = 'h-2 border border-[#777] p-0 text-center text-[4px] leading-none font-normal';
  return (
    <table className="relative w-[142px] table-fixed border-collapse text-[#333]">
      <colgroup>
        <col className="w-[25px]" />
        <col className="w-[61px]" />
        <col className="w-9" />
        <col />
      </colgroup>
      <thead>
        <tr>
          <th colSpan={4} className={cell}>REVISION RECORD</th>
        </tr>
        <tr>
          <th className={cell}>LTR</th>
          <th className={cell}>ECO NO:</th>
          <th className={cell}>APPROVED:</th>
          <th className={cell}>DATE:</th>
        </tr>
      </thead>
      <tbody>
        {[1, 2, 3, 4].map((n) => (
          <tr key={n}>
            <td className={cell} />
            <td className={cell} />
            <td className={cell} />
            <td className={cell} />
          </tr>
        ))}
      </tbody>
    </table>
  );
}

function TitleBlock() {
  const cell = 'border-r border-[#777] pl-1 leading-4';
  return (
    <div className="relative flex h-[61px] w-[612px] border-l border-t border-[#777] text-[9px] text-[#111]">
      <div className="flex w-[206px] flex-col border-r border-[#777]">
        <div className="flex h-7 shrink-0 flex-col whitespace-nowrap">
          <span className="pl-1 pt-0.5 text-[4px] leading-1">COMPANY:</span>
          <span className="text-[8px] leading-4">Shanghai ReallyTek Information Technology Co.,Ltd</span>
        </div>
        <div className="grid flex-1 grid-cols-[49px_65px_41px_1fr] grid-rows-2 border-t border-[#777]">
          <span className={cell}>DRAWN</span>
          <span className={cell}>YQY</span>
          <span className={cell}>DATED</span>
          <span className="pl-1.5 leading-4">2016-3-23</span>
          <span className={`${cell} border-t`}>CHECKED</span>
          <span className={`${cell} border-t`}>Checker</span>
          <span className={`${cell} border-t`}>DATED</span>
          <span className="border-t border-[#777] pl-1.5 leading-4">&lt;&nbsp; &gt;</span>
        </div>
      </div>
      <div className="flex w-[207px] flex-col border-r border-[#777]">
        <div className="flex h-7 shrink-0 items-center border-b border-[#777] pl-[5px]">
          <span className="w-[91px] text-[10px]">MODEL:</span>
          <span className="text-[13px]">H536</span>
        </div>
        <div className="flex flex-1 items-center gap-2 pl-[5px] text-[10px]">
          <span>TITLE:</span>
          <span>1.AUDIO_IO_VIB_RF</span>
        </div>
      </div>
      <div className="flex flex-1 flex-col text-[10px]">
        <div className="flex h-7 shrink-0 items-center border-b border-[#777] pl-1.5">
          <span className="w-[107px]">Modified Date:</span>
          <span>2016/4/19</span>
        </div>
        <div className="flex flex-1">
          <div className="flex w-[89px] items-center gap-2 border-r border-[#777] pl-1.5">
            <span>VERSION:</span>
            <span>V1.3</span>
          </div>
          <div className="flex flex-1 items-center gap-2 pl-[7px]">
            <span>SHEET:</span>
            <span>1</span>
            <span className="ml-1">OF</span>
            <span className="ml-0.5">1</span>
          </div>
        </div>
      </div>
    </div>
  );
}

function StatusBar() {
  return (
    <footer className={`${MONO} flex h-[25px] shrink-0 items-end justify-between border-b-[3px] border-t-2 border-b-[#67bfe2] border-t-[#dfe7ee] bg-[#456889] pr-0.5`}>
      <span className="leading-4 text-black">Version:1.0.0.52</span>
      <span className="leading-4 text-white">Current [H536_Sub_SCH]</span>
    </footer>
  );
}

export default function App() {
  return (
    <div className="flex h-screen flex-col overflow-hidden bg-[#f0f0f0]">
      <TitleBar />
      <Banner />
      <div className="flex min-h-0 flex-1 border-r border-[#67cbea]">
        <aside className="flex w-[262px] shrink-0 flex-col">
          <SideTabs />
          <Tree />
        </aside>
        <main className="flex min-w-0 flex-1 flex-col">
          <DocTabs />
          <Toolbar />
          <div className="flex min-h-0 flex-1 justify-center overflow-hidden bg-[#999] pl-0.5">
            <section className={`${UI} relative flex w-[952px] flex-col items-end justify-between bg-white`}>
              <Schematic />
              <RevisionTable />
              <TitleBlock />
            </section>
          </div>
        </main>
      </div>
      <StatusBar />
    </div>
  );
}
